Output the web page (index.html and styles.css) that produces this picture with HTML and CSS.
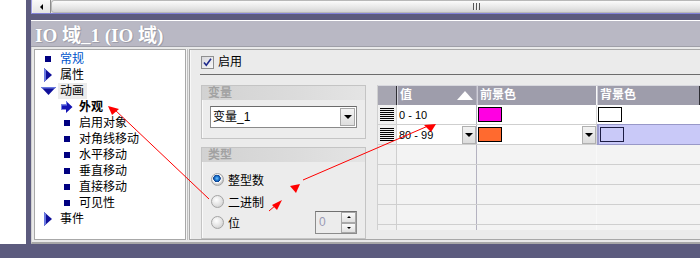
FILE: index.html
```html
<!DOCTYPE html>
<html>
<head>
<meta charset="utf-8">
<link rel="stylesheet" href="styles.css">
</head>
<body>
<div class="screen">
  <div class="main">
    <div class="blank"></div>
    <div class="frame">
      <div class="window">
        <div class="hscroll">
          <div class="sb-btn"><span class="sb-arrow"></span></div>
          <div class="sb-thumb"><span class="grip"></span></div>
        </div>
        <div class="titlebar"><span class="title-text">IO 域_1 (IO 域)</span></div>
        <div class="body">
          <div class="tree">
            <div class="ti top"><span class="ic"><span class="sq"></span></span><span class="lb blue">常规</span></div>
            <div class="ti top"><span class="ic"><svg width="8" height="14" viewBox="0 0 8 14"><polygon points="0,0 8,7 0,14" fill="#10109a"/><polygon points="0,0 2,2 2,12 0,14" fill="#6a7ae0"/></svg></span><span class="lb">属性</span></div>
            <div class="ti top"><span class="ic"><svg width="15" height="8" viewBox="0 0 15 8"><polygon points="0,0 15,0 7.5,8" fill="#10109a"/><polygon points="0,0 15,0 14,1.5 1,1.5" fill="#6a7ae0"/></svg></span><span class="lb sel">动画</span></div>
            <div class="ti sub"><span class="ic"><svg width="12" height="12" viewBox="0 0 12 12"><polygon points="0,3.5 5,3.5 5,0 11.5,6 5,12 5,8.5 0,8.5" fill="#1414b4"/><polygon points="0,3.5 5,3.5 5,0 6,1 6,4.5 1,4.5 1,8.5 0,8.5" fill="#7080e8"/></svg></span><span class="lb bold">外观</span></div>
            <div class="ti sub"><span class="ic"><span class="sq"></span></span><span class="lb">启用对象</span></div>
            <div class="ti sub"><span class="ic"><span class="sq"></span></span><span class="lb">对角线移动</span></div>
            <div class="ti sub"><span class="ic"><span class="sq"></span></span><span class="lb">水平移动</span></div>
            <div class="ti sub"><span class="ic"><span class="sq"></span></span><span class="lb">垂直移动</span></div>
            <div class="ti sub"><span class="ic"><span class="sq"></span></span><span class="lb">直接移动</span></div>
            <div class="ti sub"><span class="ic"><span class="sq"></span></span><span class="lb">可见性</span></div>
            <div class="ti top"><span class="ic"><svg width="8" height="14" viewBox="0 0 8 14"><polygon points="0,0 8,7 0,14" fill="#10109a"/><polygon points="0,0 2,2 2,12 0,14" fill="#6a7ae0"/></svg></span><span class="lb">事件</span></div>
          </div>
          <div class="rp">
            <div class="rp-head">
              <span class="cb"><svg width="11" height="11" viewBox="0 0 11 11"><path d="M2 5.5 L4.3 8.3 L9 1.8" stroke="#1e2a8c" stroke-width="1.6" fill="none"/></svg></span>
              <span class="cb-label">启用</span>
            </div>
            <div class="rp-content">
              <div class="leftcol">
                <div class="group g1">
                  <div class="ghead">变量</div>
                  <div class="combo">
                    <span class="combo-text">变量_1</span>
                    <span class="dd-btn"><span class="tri-down"></span></span>
                  </div>
                </div>
                <div class="group g2">
                  <div class="ghead">类型</div>
                  <div class="radios">
                    <div class="rrow"><span class="radio on"></span><span class="rlabel">整型数</span></div>
                    <div class="rrow"><span class="radio"></span><span class="rlabel">二进制</span></div>
                    <div class="rrow last">
                      <div class="rleft"><span class="radio"></span><span class="rlabel">位</span></div>
                      <div class="spin">
                        <span class="spin-val">0</span>
                        <span class="spin-btns"><span class="sbt"><span class="tri-up-s"></span></span><span class="sbt"><span class="tri-down-s"></span></span></span>
                      </div>
                    </div>
                  </div>
                </div>
              </div>
              <div class="tbl">
                <div class="tr th">
                  <div class="c0 hc"></div>
                  <div class="c1 hc">值<span class="sort-up"></span></div>
                  <div class="c2 hc">前景色</div>
                  <div class="c3 hc">背景色</div>
                </div>
                <div class="tr data">
                  <div class="c0"><span class="rowlines"></span></div>
                  <div class="c1"><span class="val">0 - 10</span></div>
                  <div class="c2"><span class="sw magenta"></span></div>
                  <div class="c3"><span class="sw white"></span></div>
                </div>
                <div class="tr data">
                  <div class="c0"><span class="rowlines"></span></div>
                  <div class="c1"><span class="val">80 - 99</span><span class="cell-btn"><span class="tri-down"></span></span></div>
                  <div class="c2"><span class="sw orange"></span><span class="cell-btn"><span class="tri-down"></span></span></div>
                  <div class="c3 selcell"><span class="sw lav"></span></div>
                </div>
                <div class="tr empty"><div class="c0"></div><div class="c1"></div><div class="c2"></div><div class="c3"></div></div>
                <div class="tr empty"><div class="c0"></div><div class="c1"></div><div class="c2"></div><div class="c3"></div></div>
                <div class="tr empty"><div class="c0"></div><div class="c1"></div><div class="c2"></div><div class="c3"></div></div>
                <div class="tr empty"><div class="c0"></div><div class="c1"></div><div class="c2"></div><div class="c3"></div></div>
                <div class="tr empty"><div class="c0"></div><div class="c1"></div><div class="c2"></div><div class="c3"></div></div>
              </div>
            </div>
          </div>
        </div>
      </div>
    </div>
  </div>
  <div class="bottom"></div>
  <svg class="annot" width="700" height="258" viewBox="0 0 700 258">
    <line x1="209" y1="199" x2="114" y2="109" stroke="#ff0000" stroke-width="1"/>
    <polygon points="108,106 119,109 112,115" fill="#ff0000"/>
    <line x1="303" y1="180" x2="428" y2="126" stroke="#ff0000" stroke-width="1"/>
    <polygon points="424,125 436,124 431,132" fill="#ff0000"/>
    <polygon points="290,186 300,184 296,193" fill="#ff0000"/>
    <line x1="269" y1="211" x2="276" y2="205" stroke="#ff0000" stroke-width="1"/>
    <polygon points="272,205 282,200 277,210" fill="#ff0000"/>
  </svg>
</div>
</body>
</html>
```

FILE: styles.css
```css
* { box-sizing: border-box; }
html, body { margin: 0; padding: 0; }
body {
  width: 700px;
  height: 258px;
  overflow: hidden;
  font-family: "Liberation Sans", "Noto Sans CJK SC", sans-serif;
  font-size: 12px;
  color: #000;
  background: #fff;
}
.screen { position: relative; width: 700px; height: 258px; display: flex; flex-direction: column; }
.main { display: flex; height: 244px; }
.blank { width: 26px; background: #fff; flex: none; }
.frame { flex: 1; background: #5c5b7e; padding-left: 5px; min-width: 0; }
.window { display: flex; flex-direction: column; height: 244px; }

.hscroll {
  height: 14px;
  display: flex;
  background: #f2f2f2;
  border-left: 1px solid #a0a0e4;
  border-bottom: 1px solid #8282d8;
  padding-left: 1px;
  margin-bottom: 6px;
}
.sb-btn {
  width: 18px; height: 13px;
  display: flex; align-items: center; justify-content: center;
  background: linear-gradient(#fafafa, #e4e4e4);
  border-right: 1px solid #8c8c8c;
}
.sb-arrow {
  width: 0; height: 0;
  border-top: 3px solid transparent; border-bottom: 3px solid transparent;
  border-right: 3px solid #000;
}
.sb-thumb {
  flex: 1; height: 13px;
  background: linear-gradient(#fbfbfb, #e6e6e6 60%, #d4d4d4);
  border: 1px solid #b8b8b8; border-right: none;
  border-radius: 3px 0 0 3px;
  display: flex; align-items: center; justify-content: center;
  padding-left: 200px;
}
.grip {
  width: 7px; height: 7px;
  background: repeating-linear-gradient(to right, #555 0 1px, #eee 1px 2px, transparent 2px 3px);
}
.titlebar {
  height: 27px;
  background: #b9b8c4;
  border-top: 1px solid #fff;
  border-bottom: 1px solid #9f9fa8;
  display: flex; align-items: center;
  padding-left: 4px;
}
.title-text {
  font-family: "Liberation Serif", "Noto Sans CJK SC", serif;
  font-weight: bold;
  font-size: 19px;
  color: #fff;
  text-shadow: 0 0 1px #8c8c98, 1px 1px 0 #a0a0ac;
}
.body {
  height: 197px;
  background: #e9e9e9;
  border-left: 1px solid #d0d0d0;
  padding: 2px 0 2px 2px;
  border-bottom: 2px solid #a8a8a8;
  display: flex;
  gap: 2px;
}
.tree {
  width: 152px; height: 191px;
  background: #fff;
  border: 1px solid #a8a8a8;
  box-shadow: 1px 0 0 #f4f4f4, 2px 0 0 #c0c0c0;
  padding: 1px 0 0 5px;
}
.ti { height: 16px; display: flex; align-items: center; line-height: 16px; }
.ti.sub { padding-left: 19px; }
.ic { width: 16px; height: 16px; margin-right: 4px; display: flex; align-items: center; justify-content: center; flex: none; }
.sq { width: 6px; height: 6px; background: #000080; }
.lb { white-space: nowrap; }
.lb.blue { color: #0055cc; }
.lb.sel { background: #ececec; margin-left: -2px; padding: 0 3px 0 2px; }
.lb.bold { font-weight: bold; }

.rp {
  flex: 1; height: 191px;
  background: #ebebeb;
  border: 1px solid #a8a8a8;
  border-right: none;
  box-shadow: inset 1px 0 0 #f8f8f8;
  margin-left: 1px;
  padding-left: 10px;
  overflow: hidden;
}
.rp-head {
  display: flex; align-items: center;
  padding: 6px 0 5px 1px;
  border-bottom: 1px solid #6c6c6c;
}
.rp-head .cb, .rp-head .cb-label { height: 13px; }
.cb {
  width: 13px; height: 13px;
  border: 1px solid #8e8f8f;
  background: linear-gradient(135deg, #d8d8dc, #f8f8f8);
  display: flex; align-items: center; justify-content: center;
}
.cb-label { margin-left: 4px; line-height: 13px; }
.rp-content { display: flex; margin-top: 10px; padding-left: 1px; gap: 11px; }
.leftcol { width: 165px; flex: none; display: flex; flex-direction: column; gap: 8px; }
.group { border: 1px solid #c4c4c4; background: #ececec; box-shadow: inset 1px 1px 0 #fafafa; }
.g1 { height: 54px; }
.g2 { height: 92px; }
.ghead {
  height: 14px;
  background: linear-gradient(to right, #d2d2d2, #dcdcdc 60%, #e4e4e4);
  color: #a2a2a2;
  font-weight: bold;
  padding-left: 6px;
  line-height: 14px;
}
.combo {
  margin: 6px 0 0 8px;
  width: 147px; height: 22px;
  background: #fff;
  border: 1px solid #8a8a8a;
  border-top-color: #6a6a6a;
  display: flex; align-items: center; justify-content: space-between;
  padding-left: 2px;
}
.combo-text { line-height: 18px; }
.dd-btn {
  width: 15px; height: 18px;
  margin-right: 1px;
  background: linear-gradient(#f4f4f4, #dedede);
  border: 1px solid #a8a8a8;
  display: flex; align-items: center; justify-content: center;
}
.tri-down {
  width: 0; height: 0;
  border-left: 4px solid transparent; border-right: 4px solid transparent;
  border-top: 4px solid #000;
}
.radios { padding: 6px 9px 0 9px; display: flex; flex-direction: column; }
.rrow { height: 22px; display: flex; align-items: center; }
.rrow.last { justify-content: space-between; height: 21px; }
.rleft { display: flex; align-items: center; }
.radio {
  width: 13px; height: 13px; border-radius: 50%;
  border: 1px solid #a4a4a4;
  background: radial-gradient(circle at 40% 35%, #ffffff, #e2e2e2 55%, #c4c4c4);
  margin-right: 4px; flex: none;
}
.radio.on {
  background: radial-gradient(circle at 45% 40%, #7ac4ff 0, #1c78d0 2px, #0c3e8c 3.5px, #ffffff 4px, #e4e4e4 5px, #c8c8c8 6px);
}
.spin {
  width: 42px; height: 23px;
  border: 1px solid #8c8c8c;
  border-top-color: #707070;
  background: #ececec;
  display: flex; justify-content: space-between;
  margin-right: -1px;
}
.spin-val { color: #9a9ab4; padding-left: 3px; line-height: 21px; }
.spin-btns { width: 15px; display: flex; flex-direction: column; }
.sbt {
  flex: 1; background: linear-gradient(#fafafa, #e0e0e0);
  border: 1px solid #a8a8a8;
  display: flex; align-items: center; justify-content: center;
}
.tri-up-s { width: 0; height: 0; border-left: 2px solid transparent; border-right: 2px solid transparent; border-bottom: 2px solid #000; }
.tri-down-s { width: 0; height: 0; border-left: 2px solid transparent; border-right: 2px solid transparent; border-top: 2px solid #000; }

.tbl {
  flex: 1; height: 145px; overflow: hidden;
  display: flex; flex-direction: column;
  border-left: 1px solid #d0d0d0;
}
.tr { height: 20px; display: flex; flex: none; border-bottom: 1px solid #cfcfcf; }
.c0 { width: 19px; flex: none; }
.c1 { width: 80px; flex: none; }
.c2 { width: 120px; flex: none; }
.c3 { flex: 1; }
.th { background: #9e9dab; border-top: 1px solid #d8d8de; border-bottom: none; }
.hc {
  color: #fff; font-weight: bold;
  border-left: 1px solid #cfcfd8;
  border-right: 1px solid #2e2e34;
  padding-left: 2px;
  line-height: 19px;
  position: relative;
  display: flex; align-items: center;
}
.c0.hc { border-left: none; background: #a6a5b1; }
.sort-up {
  width: 0; height: 0; margin-left: auto; margin-right: 3px;
  border-left: 8px solid transparent; border-right: 8px solid transparent;
  border-bottom: 9px solid #fff;
}
.data { background: #fff; }
.data .c0, .empty .c0 { background: #f0f0f0; border-right: 1px solid #cfcfcf; display: flex; align-items: center; justify-content: center; }
.c1 { border-right: 1px solid #b4b2c0; }
.c2 { border-right: 1px solid #f8f8f8; }
.data .c1, .data .c2 { display: flex; align-items: center; justify-content: space-between; }
.data .c2 { border-right-color: #d8d8d8; }
.data .c3 { display: flex; align-items: center; }
.empty { background: #f3f3f3; }
.rowlines {
  width: 14px; height: 13px;
  background: repeating-linear-gradient(#000 0 1px, transparent 1px 2px);
}
.val { padding-left: 2px; font-size: 11px; }
.sw { width: 24px; height: 15px; border: 1px solid #000; margin-left: 1px; }
.magenta { background: #ff00e2; }
.white { background: #fff; }
.orange { background: #ff6a2f; }
.lav { background: #c9c9f8; border-color: #1c1c44; }
.cell-btn {
  width: 14px; height: 18px;
  background: linear-gradient(#f2f2f2, #dcdcdc);
  border: 1px solid #b0b0b0;
  display: flex; align-items: center; justify-content: center;
}
.selcell {
  background: #c9c9f8;
  border-top: 1px solid #9898c8;
  border-bottom: 1px solid #9898c8;
  border-left: 2px solid #9a9acc;
  margin-top: -1px;
  margin-bottom: -1px;
}
.bottom { height: 14px; background: #5c5b7e; }
.annot { position: absolute; left: 0; top: 0; pointer-events: none; }
```
